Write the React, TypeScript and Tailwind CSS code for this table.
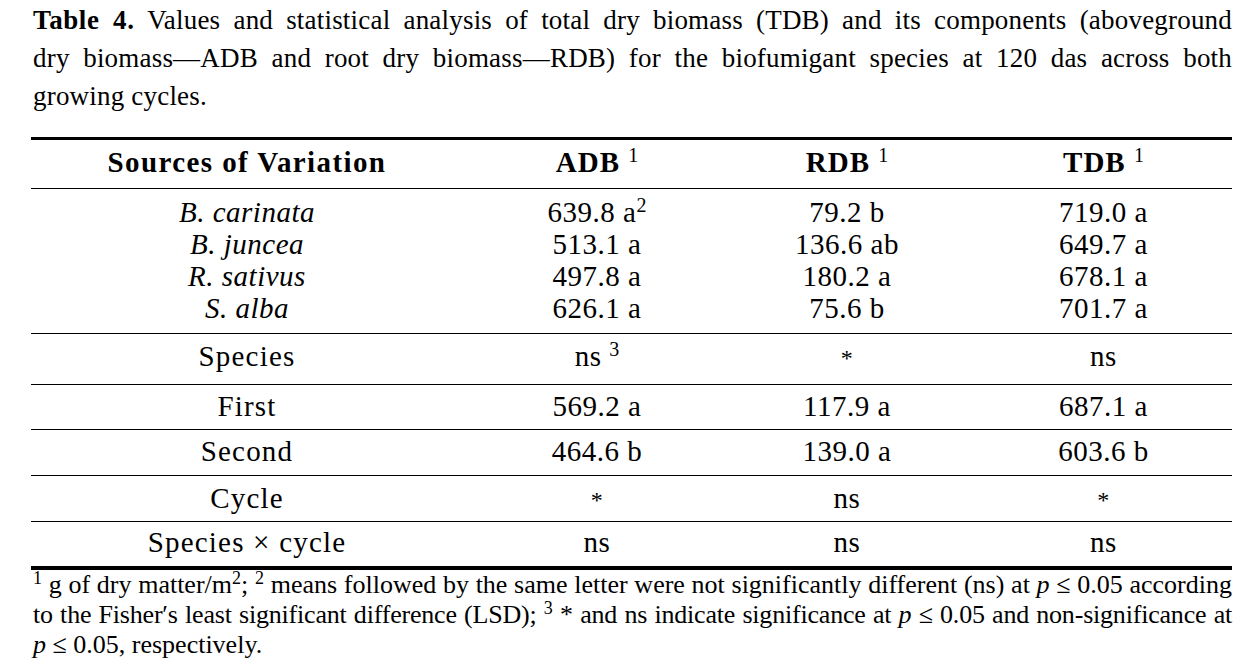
import React from "react";

const COLS = "grid grid-cols-[432px_268px_232px_269px]";

function Sup({ children, space = false, small = false }: { children: React.ReactNode; space?: boolean; small?: boolean }) {
  return (
    <>
      {space ? " " : null}
      <sup className={`${small ? "text-[18px]" : "text-[20px]"} font-normal tracking-normal`}>{children}</sup>
    </>
  );
}

function Row({
  h,
  pt,
  cells,
  last = false,
}: {
  h: string;
  pt: string;
  cells: React.ReactNode[];
  last?: boolean;
}) {
  return (
    <div className={`${COLS} ${h} ${pt} ${last ? "border-b-4" : "border-b"} border-black`}>
      <div className="text-center tracking-[1.2px]">{cells[0]}</div>
      <div className="text-center">{cells[1]}</div>
      <div className="text-center">{cells[2]}</div>
      <div className="text-center pl-[12px]">{cells[3]}</div>
    </div>
  );
}

function Star() {
  return <span className="text-[24px]">*</span>;
}

export default function App() {
  const species = [
    ["B. carinata", <>639.8 a<Sup>2</Sup></>, "79.2 b", "719.0 a"],
    ["B. juncea", "513.1 a", "136.6 ab", "649.7 a"],
    ["R. sativus", "497.8 a", "180.2 a", "678.1 a"],
    ["S. alba", "626.1 a", "75.6 b", "701.7 a"],
  ];
  return (
    <div className="min-h-[661px] w-[1249px] bg-white text-black font-['Liberation_Serif','Times_New_Roman',serif]">
      <div className="ml-[31px] w-[1201px] pt-px">
        <div className="text-[27px] leading-[38px] pl-[2px] tracking-[0.2px]">
          <div className="text-justify [text-align-last:justify] whitespace-nowrap">
            <b className="tracking-[0.6px]">Table 4.</b> Values and statistical analysis of total dry biomass (TDB) and its components (aboveground
          </div>
          <div className="text-justify [text-align-last:justify] whitespace-nowrap">
            dry biomass—ADB and root dry biomass—RDB) for the biofumigant species at 120 das across both
          </div>
          <div>growing cycles.</div>
        </div>

        <div className="mt-[22px] border-t-[3px] border-black text-[29px] leading-[32px] tracking-[0.5px]">
          <div className={`${COLS} h-[49px] pt-[6px] border-b border-black font-bold`}>
            <div className="text-center tracking-[1.4px]">Sources of Variation</div>
            <div className="text-center tracking-[1px]">ADB<Sup space>1</Sup></div>
            <div className="text-center tracking-[1px]">RDB<Sup space>1</Sup></div>
            <div className="text-center pl-[12px] tracking-[1px]">TDB<Sup space>1</Sup></div>
          </div>
          <div className={`${COLS} h-[145px] pt-[7px] border-b border-black`}>
            <div className="text-center italic flex flex-col">
              {species.map((s, i) => (
                <div key={i}>{s[0]}</div>
              ))}
            </div>
            <div className="text-center flex flex-col">
              {species.map((s, i) => (
                <div key={i}>{s[1]}</div>
              ))}
            </div>
            <div className="text-center flex flex-col">
              {species.map((s, i) => (
                <div key={i}>{s[2]}</div>
              ))}
            </div>
            <div className="text-center pl-[12px] flex flex-col">
              {species.map((s, i) => (
                <div key={i}>{s[3]}</div>
              ))}
            </div>
          </div>
          <Row h="h-[51px]" pt="pt-[6px]" cells={["Species", <>ns<Sup space>3</Sup></>, <Star />, "ns"]} />
          <Row h="h-[45px]" pt="pt-[5px]" cells={["First", "569.2 a", "117.9 a", "687.1 a"]} />
          <Row h="h-[46px]" pt="pt-[5px]" cells={["Second", "464.6 b", "139.0 a", "603.6 b"]} />
          <Row h="h-[46px]" pt="pt-[6px]" cells={["Cycle", <Star />, "ns", <Star />]} />
          <Row h="h-[48px]" pt="pt-[4px]" last cells={["Species × cycle", "ns", "ns", "ns"]} />
        </div>

        <div className="text-[26px] leading-[30px] pl-[2px]">
          <div className="text-justify [text-align-last:justify] whitespace-nowrap">
            <Sup small>1</Sup> g of dry matter/m<Sup small>2</Sup>; <Sup small>2</Sup> means followed by the same letter were not significantly different (ns) at <i>p</i> ≤ 0.05 according
          </div>
          <div className="text-justify [text-align-last:justify] whitespace-nowrap tracking-[-0.2px]">
            to the Fisher′s least significant difference (LSD); <Sup small>3</Sup> * and ns indicate significance at <i>p</i> ≤ 0.05 and non-significance at
          </div>
          <div>
            <i>p</i> ≤ 0.05, respectively.
          </div>
        </div>
      </div>
    </div>
  );
}
